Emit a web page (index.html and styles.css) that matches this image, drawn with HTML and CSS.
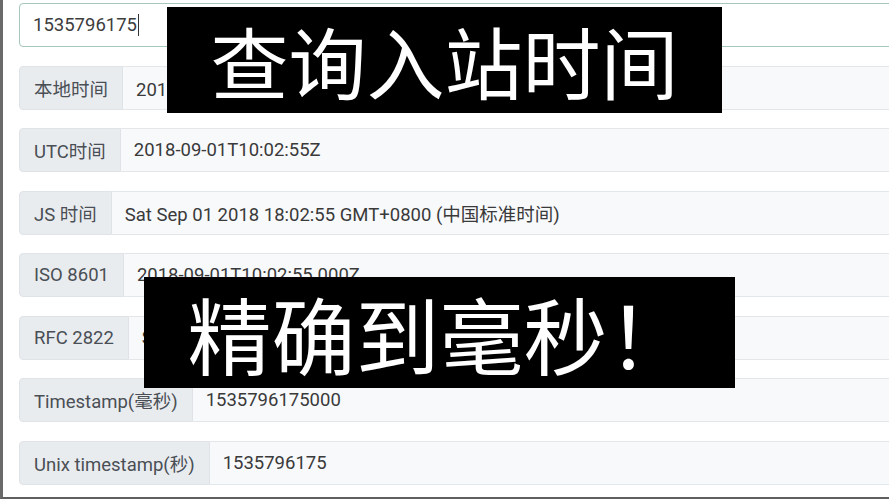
FILE: index.html
```html
<!DOCTYPE html>
<html lang="zh-CN">
<head>
<meta charset="utf-8">
<title>Timestamp</title>
<link rel="stylesheet" href="styles.css">
</head>
<body>
<div class="screen">
  <div class="form">
    <div class="field"><span class="field-text">1535796175</span><span class="caret"></span></div>
    <div class="group"><span class="label">本地时间</span><span class="value">2018/9/1 下午6:02:55</span></div>
    <div class="group"><span class="label">UTC时间</span><span class="value">2018-09-01T10:02:55Z</span></div>
    <div class="group"><span class="label">JS 时间</span><span class="value">Sat Sep 01 2018 18:02:55 GMT+0800 (中国标准时间)</span></div>
    <div class="group"><span class="label">ISO 8601</span><span class="value">2018-09-01T10:02:55.000Z</span></div>
    <div class="group"><span class="label">RFC 2822</span><span class="value">Sat, 01 Sep 2018 10:02:55 GMT</span></div>
    <div class="group"><span class="label">Timestamp(毫秒)</span><span class="value">1535796175000</span></div>
    <div class="group"><span class="label">Unix timestamp(秒)</span><span class="value">1535796175</span></div>
  </div>
  <div class="caption cap1">查询入站时间</div>
  <div class="caption cap2">精确到毫秒！</div>
</div>
</body>
</html>
```

FILE: styles.css
```css
html, body {
  margin: 0;
  padding: 0;
  background: #fff;
  overflow: hidden;
}

.screen {
  position: relative;
  width: 889px;
  height: 499px;
  box-sizing: border-box;
  border-left: 3px solid #6a6a6a;
  border-bottom: 2px solid #5f5f5f;
  overflow: hidden;
  font-family: Roboto, "Noto Sans CJK SC", sans-serif;
  font-size: 18.5px;
}

.form {
  width: 1000px;
  padding: 3px 0 0 16px;
  display: flex;
  flex-direction: column;
  gap: 18.5px;
}

.field {
  height: 44px;
  box-sizing: border-box;
  border: 1px solid #a5c7bd;
  border-radius: 4px;
  background: #fff;
  display: flex;
  align-items: center;
  padding-left: 13px;
  color: #3d3d3d;
}

.caret {
  width: 1.5px;
  height: 22px;
  background: #333;
  margin-left: 1px;
}

.group {
  display: flex;
  height: 44px;
}

.label {
  box-sizing: border-box;
  background: #e9ecef;
  border: 1px solid #dfe3e7;
  border-radius: 4px 0 0 4px;
  padding: 0 14px;
  display: flex;
  align-items: center;
  color: #4a4f55;
  white-space: nowrap;
}

.value {
  flex: 1;
  box-sizing: border-box;
  background: #f8f9fa;
  border: 1px solid #e4e7ea;
  border-left: 0;
  padding-left: 13px;
  display: flex;
  align-items: center;
  color: #3a3a3a;
  white-space: nowrap;
}

.caption {
  position: absolute;
  background: #000;
  color: #fff;
  font-family: "Noto Sans CJK SC", sans-serif;
  display: flex;
  align-items: center;
  justify-content: center;
  line-height: 1;
  white-space: nowrap;
}

.cap1 {
  left: 164px;
  top: 7px;
  width: 555px;
  height: 106px;
  font-size: 78px;
}

.cap2 {
  left: 141px;
  top: 277px;
  width: 591px;
  height: 111px;
  font-size: 84px;
}
```
